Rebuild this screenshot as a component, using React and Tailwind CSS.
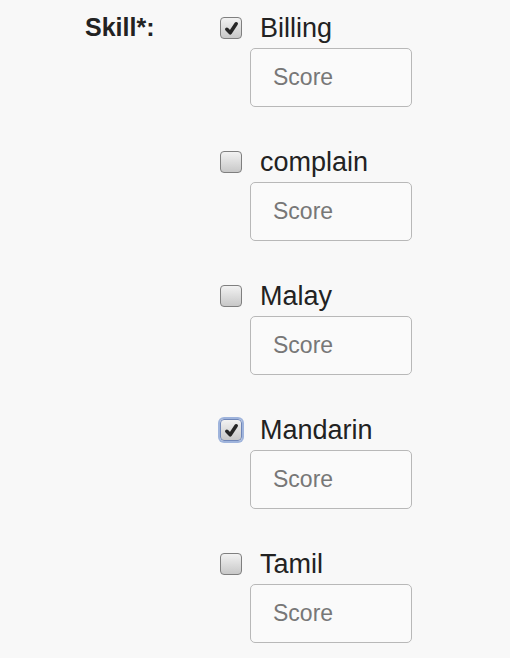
import { useState } from 'react';

const skills = [
  { name: 'Billing', checked: true },
  { name: 'complain', checked: false },
  { name: 'Malay', checked: false },
  { name: 'Mandarin', checked: true, focused: true },
  { name: 'Tamil', checked: false },
];

function Box({ checked, focused, onClick }) {
  return (
    <button
      type="button"
      onClick={onClick}
      className={`w-[22px] h-[22px] flex items-center justify-center rounded-[4px] border bg-gradient-to-b from-[#f2f2f2] to-[#c8c8c8] ${
        focused ? 'border-[#6f86b8] ring-2 ring-[#9fb4dc]' : 'border-[#7f7f7f]'
      }`}
    >
      {checked && (
        <svg viewBox="0 0 20 20" className="w-[17px] h-[17px]">
          <path d="M4.5 11 L8.5 15 L15.5 4.5" fill="none" stroke="#262626" strokeWidth="4.2" strokeLinecap="round" strokeLinejoin="round" />
        </svg>
      )}
    </button>
  );
}

export default function App() {
  const [items, setItems] = useState(skills);

  const toggle = (i) => {
    setItems(items.map((s, j) => (j === i ? { ...s, checked: !s.checked } : s)));
  };

  return (
    <div
      className="w-[510px] h-[658px] bg-[#f8f8f8] flex pt-[12px] pl-[85px] text-[#222]"
      style={{ fontFamily: '"Liberation Sans", Arial, sans-serif' }}
    >
      <div className="w-[135px] h-[32px] flex items-center text-[25px] font-bold">
        Skill*:
      </div>
      <div className="flex flex-col">
        {items.map((s, i) => (
          <div key={s.name} className="mb-[38px]">
            <div className="h-[32px] flex items-center">
              <Box checked={s.checked} focused={s.focused} onClick={() => toggle(i)} />
              <span className="ml-[18px] text-[27px]">{s.name}</span>
            </div>
            <input
              type="text"
              placeholder="Score"
              className="mt-[4px] mb-[1px] ml-[30px] w-[162px] h-[59px] rounded-[5px] border border-[#b8b8b8] bg-[#fafafa] px-[22px] text-[23px] placeholder:text-[#777] outline-none"
            />
          </div>
        ))}
      </div>
    </div>
  );
}
